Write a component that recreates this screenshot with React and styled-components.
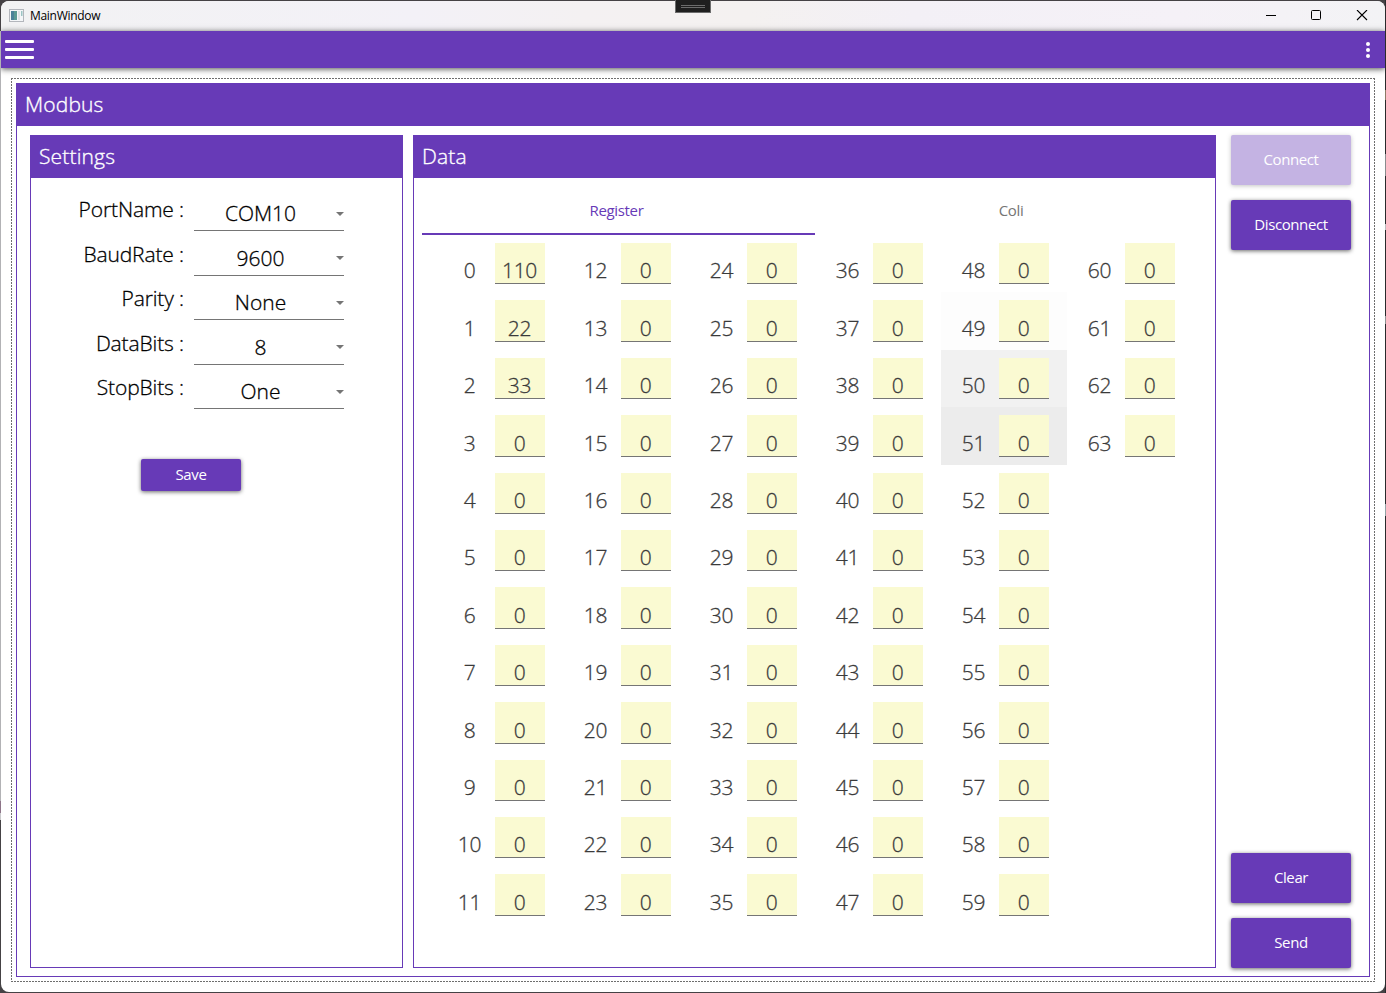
import React from "react";
import styled, { createGlobalStyle } from "styled-components";

const PURPLE = "#673ab7";

const GlobalStyle = createGlobalStyle`
  *, *::before, *::after { box-sizing: border-box; }
  body {
    margin: 0;
    font-family: "Open Sans", "Noto Sans", sans-serif;
    background: #3f3d3f;
    overflow: hidden;
  }
  button { font-family: inherit; }
`;

const Desktop = styled.div`
  width: 1386px;
  height: 993px;
  padding: 1px;
  background:
    linear-gradient(#b2b2b5 0 770px, #8d7488 770px 782px, #c9c9cc 782px 789px) 0 31px / 1px 789px no-repeat,
    linear-gradient(#8c7a66 0 10px, transparent 10px 64px, #8a8c8e 64px 86px, transparent 86px 134px, #b8babc 134px 140px, transparent 140px 226px, #8e9192 226px 234px, transparent 234px 414px, #93a3a6 414px 426px, transparent 426px) 100% 90px / 1px 500px no-repeat,
    linear-gradient(#2a2a2c, #2a2a2c) 100% 0 / 1px 100% no-repeat,
    #454245;
`;

const Window = styled.div`
  height: 991px;
  display: flex;
  flex-direction: column;
  background: #fff;
  border-radius: 8px;
  overflow: hidden;
`;

const TitleBar = styled.header`
  flex: none;
  height: 30px;
  display: flex;
  align-items: center;
  padding: 0 17px 0 8px;
  background: linear-gradient(90deg, #f2f2f3 0%, #f3f1f7 30%, #f4f1f2 42%, #f4f1f0 54%, #f3f0f6 66%, #f5f1f7 85%, #f3f3f5 100%);
`;

const AppIcon = styled.svg`
  flex: none;
  margin: 0 6px 2px 0;
`;

const WindowTitle = styled.span`
  flex: 1;
  font-size: 12px;
  line-height: 16px;
  letter-spacing: -0.3px;
  color: #000;
`;

const WindowControls = styled.div`
  display: flex;
  align-items: center;
  gap: 34px;
`;

const DebugHandle = styled.div`
  position: absolute;
  left: 675px;
  top: 0;
  width: 36px;
  height: 13px;
  padding: 5px 5px 0;
  border: 1px solid #6c6c6c;
  border-top: 0;
  background: #1f1f1f;

  &::before {
    content: "";
    display: block;
    height: 3px;
    border: solid #6c6c6c;
    border-width: 1px 0;
  }
`;

const AppBar = styled.div`
  flex: none;
  height: 37px;
  display: flex;
  align-items: center;
  justify-content: space-between;
  padding: 0 13px 0 4px;
  background: ${PURPLE};
  box-shadow: 0 1px 6px rgba(0, 0, 0, 0.7);
`;

const MenuIcon = styled.div`
  width: 29px;
  height: 19px;
  display: flex;
  flex-direction: column;
  justify-content: space-between;

  & > span {
    height: 3px;
    background: #fff;
    border-radius: 1px;
  }
`;

const MoreIcon = styled.div`
  display: flex;
  flex-direction: column;
  gap: 2px;
  margin-right: 2px;

  & > span {
    width: 4px;
    height: 4px;
    border-radius: 50%;
    background: #fff;
  }
`;

const Main = styled.main`
  flex: 1;
  min-height: 0;
  padding: 10px;
  display: flex;
`;

const FocusFrame = styled.div`
  flex: 1;
  display: flex;
  padding: 5px;
  background:
    repeating-linear-gradient(90deg, #6e6e6e 0 2px, #fff 2px 3px) 0 0 / 100% 1px no-repeat,
    repeating-linear-gradient(90deg, #6e6e6e 0 2px, #fff 2px 3px) 0 100% / 100% 1px no-repeat,
    repeating-linear-gradient(#6e6e6e 0 2px, #fff 2px 3px) 0 0 / 1px 100% no-repeat,
    repeating-linear-gradient(#6e6e6e 0 2px, #fff 2px 3px) 100% 0 / 1px 100% no-repeat;
`;

const GroupBox = styled.section`
  flex: ${(p) => (p.$width ? "none" : 1)};
  width: ${(p) => (p.$width ? p.$width + "px" : "auto")};
  display: flex;
  flex-direction: column;
  border: 1px solid ${PURPLE};
`;

const GroupHeader = styled.h2`
  flex: none;
  height: 42px;
  margin: 0;
  padding: 0 8px;
  font-size: 21px;
  font-weight: 300;
  line-height: 41px;
  letter-spacing: 0.15px;
  color: #fff;
  -webkit-text-stroke: 0.35px #fff;
  background: ${PURPLE};
`;

const GroupBody = styled.div`
  flex: 1;
  display: flex;
  padding: 9px 18px 8px 13px;
`;

const SettingsForm = styled.div`
  padding: 8px 58px 0 8px;
  display: flex;
  flex-direction: column;
  align-items: stretch;
`;

const Field = styled.div`
  height: 44.5px;
  display: flex;
  justify-content: flex-end;
`;

const FieldLabel = styled.label`
  margin-right: 10px;
  font-size: 21px;
  font-weight: 300;
  line-height: 47px;
  letter-spacing: -0.12px;
  -webkit-text-stroke: 0.3px #000;
  white-space: pre;
  color: #000;
`;

const Select = styled.div`
  width: 150px;
  height: 45px;
  display: flex;
  align-items: center;
  border-bottom: 1px solid #757575;
  font-size: 21px;
  font-weight: 300;
  color: #000;
  -webkit-text-stroke: 0.3px #000;
`;

const SelectValue = styled.span`
  flex: 1;
  text-align: center;
  line-height: 30px;
  margin-top: 10px;
`;

const Caret = styled.span`
  margin: 11px 0 0 9px;
  border: 4px solid transparent;
  border-top-color: #757575;
  border-bottom: 0;
`;

const Button = styled.button`
  flex: none;
  width: ${(p) => (p.$small ? 100 : 120)}px;
  height: ${(p) => (p.$small ? 32 : 50)}px;
  padding: ${(p) => (p.$small ? "0 0 2px" : "0 0 3px")};
  border: 0;
  border-radius: 2px;
  font-size: 15px;
  line-height: 20px;
  letter-spacing: -0.4px;
  color: #fff;
  background: ${PURPLE};
  box-shadow: 0 1px 4px rgba(0, 0, 0, 0.6);
  opacity: ${(p) => (p.disabled ? 0.38 : 1)};
`;

const SaveRow = styled.div`
  display: flex;
  justify-content: center;
  padding: 50px 1px 0 0;
`;

const DataBody = styled.div`
  flex: 1;
  display: flex;
  flex-direction: column;
  padding: 8px 7px 0 8px;
`;

const Tabs = styled.div`
  display: flex;
  height: 49px;
`;

const Tab = styled.div`
  flex: none;
  width: 50%;
  padding-right: ${(p) => (p.$active ? 4 : 1)}px;
  border-bottom: 2px solid ${(p) => (p.$active ? PURPLE : "transparent")};
  text-align: center;
  font-size: 15px;
  letter-spacing: -0.35px;
  line-height: 49px;
  color: ${(p) => (p.$active ? PURPLE : "#757575")};
`;

const RegisterGrid = styled.div`
  display: grid;
  grid-auto-flow: column;
  grid-template-rows: repeat(12, 57.4px);
  grid-auto-columns: 126px;
  padding-left: 15px;
`;

const RegisterCell = styled.div`
  display: flex;
  padding: 8px 0 8px 8px;
  font-size: 21px;
  font-weight: 300;
  line-height: 55px;
  letter-spacing: -0.3px;
  text-align: center;
  color: #3a3a3a;
  -webkit-text-stroke: 0.3px #3a3a3a;
  background: ${(p) => p.$shade || "transparent"};
`;

const RegisterIndex = styled.span`
  width: 50px;
  padding: 0.4px 1px 0 0;
`;

const RegisterValue = styled.span`
  width: 50px;
  padding: 0.4px 1px 0 0;
  border-bottom: 1px solid #757575;
  background: #fafad2;
`;

const Actions = styled.aside`
  width: 120px;
  margin-left: 15px;
  display: flex;
  flex-direction: column;
  gap: 15px;
`;

const Spacer = styled.div`
  flex: 1;
`;

const Panels = styled.div`
  display: flex;
  gap: 10px;
`;

const settings = [
  { label: "PortName", value: "COM10" },
  { label: "BaudRate", value: "9600" },
  { label: "Parity", value: "None" },
  { label: "DataBits", value: "8" },
  { label: "StopBits", value: "One" },
];

const values = { 0: 110, 1: 22, 2: 33 };
const shades = { 49: "#fdfdfd", 50: "#f1f1f1", 51: "#ececec" };
const registers = Array.from({ length: 64 }, (_, index) => ({
  index,
  value: values[index] || 0,
  shade: shades[index],
}));

export default function App() {
  return (
    <>
      <GlobalStyle />
      <Desktop>
        <Window>
          <TitleBar>
            <AppIcon width="15" height="13" viewBox="0 0 15 13">
              <rect x="0.5" y="0.5" width="14" height="12" fill="#f4f6f8" stroke="#b3b6bc" />
              <rect x="2" y="2" width="6" height="9" fill="#5a9a94" />
              <rect x="2" y="2" width="3" height="9" fill="#4a8299" />
              <rect x="9" y="2" width="2" height="9" fill="#dfe3e6" />
              <rect x="12" y="2" width="1.5" height="5" fill="#9cc4c4" />
            </AppIcon>
            <WindowTitle>MainWindow</WindowTitle>
            <WindowControls>
              <svg width="12" height="12" viewBox="0 0 12 12">
                <path d="M2 5.5h10" stroke="#000" />
              </svg>
              <svg width="12" height="12" viewBox="0 0 12 12" fill="none" stroke="#000">
                <rect x="1.5" y="0.5" width="9" height="9" rx="1" />
              </svg>
              <svg width="12" height="12" viewBox="0 0 12 12" fill="none" stroke="#000" strokeWidth="1.1">
                <path d="M1 0l10 10M11 0L1 10" />
              </svg>
            </WindowControls>
          </TitleBar>
          <AppBar>
            <MenuIcon><span /><span /><span /></MenuIcon>
            <MoreIcon><span /><span /><span /></MoreIcon>
          </AppBar>
          <Main>
            <FocusFrame>
              <GroupBox>
                <GroupHeader>Modbus</GroupHeader>
                <GroupBody>
                  <Panels>
                    <GroupBox $width={373}>
                      <GroupHeader>Settings</GroupHeader>
                      <SettingsForm>
                        {settings.map((s) => (
                          <Field key={s.label}>
                            <FieldLabel>{s.label + " :"}</FieldLabel>
                            <Select>
                              <SelectValue>{s.value}</SelectValue>
                              <Caret />
                            </Select>
                          </Field>
                        ))}
                        <SaveRow>
                          <Button $small>Save</Button>
                        </SaveRow>
                      </SettingsForm>
                    </GroupBox>
                    <GroupBox $width={803}>
                      <GroupHeader>Data</GroupHeader>
                      <DataBody>
                        <Tabs>
                          <Tab $active>Register</Tab>
                          <Tab>Coli</Tab>
                        </Tabs>
                        <RegisterGrid>
                          {registers.map((r) => (
                            <RegisterCell key={r.index} $shade={r.shade}>
                              <RegisterIndex>{r.index}</RegisterIndex>
                              <RegisterValue>{r.value}</RegisterValue>
                            </RegisterCell>
                          ))}
                        </RegisterGrid>
                      </DataBody>
                    </GroupBox>
                  </Panels>
                  <Actions>
                    <Button disabled>Connect</Button>
                    <Button>Disconnect</Button>
                    <Spacer />
                    <Button>Clear</Button>
                    <Button>Send</Button>
                  </Actions>
                </GroupBody>
              </GroupBox>
            </FocusFrame>
          </Main>
        </Window>
        <DebugHandle />
      </Desktop>
    </>
  );
}
